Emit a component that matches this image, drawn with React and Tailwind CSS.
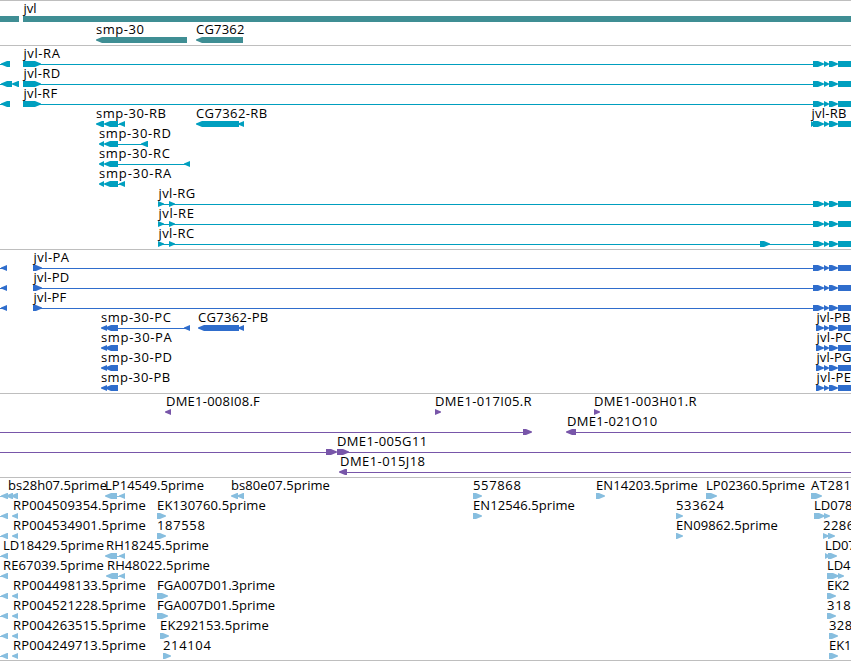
import React from "react";

const FONT = '13px "Open Sans"';
const ruler = document.createElement("canvas").getContext("2d");

// Tracking (px per character) that makes a label span its allotted width.
function tracking(text, width) {
  ruler.font = FONT;
  return (width - ruler.measureText(text).width) / text.length;
}

// Features: "<" and ">" are stranded blocks, "=" is a plain block, "-" an intron line.
const TAIL = [[">", 813, 824], [">", 824, 829], [">", 829, 838], ["=", 838, 851]];
const PTAIL = [[">", 816, 824], [">", 824, 829], [">", 829, 838], ["=", 838, 851]];
const LEFT = [["-", 0, 3], ["<", 1, 10]];
const PLEFT = [["-", 0, 3], ["<", 1, 7]];
const EST = [["-", 0, 4], ["<", 1, 8]];
const EST2 = [...EST, ["<", 12, 18]];

const row = (labels, features) => ({ labels, features });

const tracks = [
  {
    color: "text-[#3f8e94]",
    gap: "gap-px",
    rows: [
      row([["jvl", 23.5, 36]], [["=", 0, 19], ["=", 23, 851]]),
      row([["smp-30", 96, 144], ["CG7362", 196, 244]], [["<", 96, 187], ["<", 196, 243]]),
    ],
  },
  {
    color: "text-[#009fbf]",
    gap: "gap-0",
    rows: [
      row([["jvl-RA", 23.5, 60]], [...LEFT, [">", 23, 41], ["-", 40, 813], ...TAIL]),
      row([["jvl-RD", 23.5, 60]], [["-", 0, 3], ["<", 1, 12], ["<", 12, 19], [">", 23, 41], ["-", 40, 813], ...TAIL]),
      row([["jvl-RF", 23.5, 57]], [...LEFT, [">", 23, 41], ["-", 40, 813], ...TAIL]),
      row(
        [["smp-30-RB", 96, 166], ["CG7362-RB", 196, 267], ["jvl-RB", 811.5, 846]],
        [["<", 96, 104], ["<", 104, 118], ["-", 118, 122], ["<", 119, 125], ["<", 196, 239], ["<", 238, 244], [">", 811, 815], ...TAIL]
      ),
      row([["smp-30-RD", 99, 171]], [["<", 99, 104], ["<", 104, 118], ["-", 118, 144], ["<", 141, 148]]),
      row([["smp-30-RC", 99, 170]], [["<", 99, 104], ["<", 104, 118], ["-", 118, 187], ["<", 184, 190]]),
      row([["smp-30-RA", 99, 171.5]], [["<", 99, 104], ["<", 104, 118], ["-", 118, 122], ["<", 119, 125]]),
      row([["jvl-RG", 158.5, 195]], [[">", 158, 164], ["-", 161, 813], [">", 169, 175], ...TAIL]),
      row([["jvl-RE", 158.5, 194]], [[">", 158, 164], ["-", 161, 813], [">", 169, 175], ...TAIL]),
      row([["jvl-RC", 158.5, 194]], [[">", 158, 164], ["-", 161, 813], [">", 169, 175], [">", 760, 770], ...TAIL]),
    ],
  },
  {
    color: "text-[#2f6dcc]",
    gap: "gap-0",
    rows: [
      row([["jvl-PA", 33.5, 69]], [...PLEFT, [">", 33, 42], ["-", 40, 813], ...TAIL]),
      row([["jvl-PD", 33.5, 69]], [...PLEFT, [">", 33, 42], ["-", 40, 813], ...TAIL]),
      row([["jvl-PF", 33.5, 66]], [...PLEFT, [">", 33, 42], ["-", 40, 813], ...TAIL]),
      row(
        [["smp-30-PC", 101, 171], ["CG7362-PB", 198, 268], ["jvl-PB", 816.5, 850]],
        [["<", 101, 107], ["<", 105, 118], ["-", 118, 187], ["<", 184, 190], ["<", 198, 239], ["<", 238, 244], ...PTAIL]
      ),
      row([["smp-30-PA", 101, 172], ["jvl-PC", 816.5, 851]], [["<", 101, 107], ["<", 105, 118], ...PTAIL]),
      row([["smp-30-PD", 101, 172], ["jvl-PG", 816.5, 851]], [["<", 101, 107], ["<", 105, 118], ...PTAIL]),
      row([["smp-30-PB", 101, 170], ["jvl-PE", 816.5, 851]], [["<", 101, 107], ["<", 105, 118], ...PTAIL]),
    ],
  },
  {
    color: "text-[#7856a9]",
    gap: "gap-0",
    rows: [
      row(
        [["DME1-008I08.F", 166, 259.5], ["DME1-017I05.R", 435, 531.5], ["DME1-003H01.R", 594, 696.5]],
        [["<", 165, 171], [">", 435, 441], [">", 594, 600]]
      ),
      row([["DME1-021O10", 567, 657]], [["-", 0, 523], [">", 523, 532], ["<", 566, 576], ["-", 576, 851]]),
      row([["DME1-005G11", 337, 427]], [["-", 0, 326], [">", 326, 337], [">", 337, 349], ["-", 347, 851]]),
      row([["DME1-015J18", 340, 425]], [["<", 339, 347], ["-", 347, 851]]),
    ],
  },
  {
    color: "text-[#87bedf]",
    gap: "gap-0",
    rows: [
      row(
        [["bs28h07.5prime", 8, 106.5], ["LP14549.5prime", 105, 203.5], ["bs80e07.5prime", 231, 329.5], ["557868", 473, 521], ["EN14203.5prime", 596, 697.5], ["LP02360.5prime", 706, 804.5], ["AT281", 811, 851]],
        [["-", 0, 4], ["<", 1, 8], ["<", 6, 13], ["<", 11, 18], ["<", 105, 117], ["-", 117, 122], ["<", 119, 125], ["<", 231, 238], ["<", 237, 244], [">", 473, 482], [">", 596, 605], [">", 706, 717], [">", 811, 822]]
      ),
      row(
        [["RP004509354.5prime", 13, 145.5], ["EK130760.5prime", 157, 265.5], ["EN12546.5prime", 473, 574.5], ["533624", 676, 724], ["LD078", 814, 852]],
        [...EST2, [">", 157, 166], [">", 473, 482], [">", 676, 683], [">", 814, 825], [">", 824, 830]]
      ),
      row(
        [["RP004534901.5prime", 13, 145.5], ["187558", 157, 205], ["EN09862.5prime", 676, 777.5], ["2286", 823, 854]],
        [...EST2, [">", 157, 166], [">", 676, 683], [">", 823, 829], [">", 828, 835]]
      ),
      row([["LD18429.5prime", 3, 103.5], ["RH18245.5prime", 106, 208.5], ["LD07", 825, 855]], [...EST, ["<", 105, 117], ["-", 117, 122], ["<", 119, 125], [">", 825, 830], [">", 828, 837]]),
      row([["RE67039.5prime", 3, 103.5], ["RH48022.5prime", 107, 209.5], ["LD4", 827, 850]], [...EST, ["<", 106, 118], ["-", 118, 122], ["<", 119, 125], [">", 827, 839], [">", 838, 844]]),
      row([["RP004498133.5prime", 13, 145.5], ["FGA007D01.3prime", 157, 274.5], ["EK2", 827, 849]], [...EST2, [">", 157, 168], [">", 827, 836]]),
      row([["RP004521228.5prime", 13, 145.5], ["FGA007D01.5prime", 157, 274.5], ["318", 827, 851]], [...EST2, [">", 157, 168], [">", 827, 836]]),
      row([["RP004263515.5prime", 13, 145.5], ["EK292153.5prime", 160, 268.5], ["328", 829, 852]], [...EST2, [">", 160, 169], [">", 829, 838]]),
      row([["RP004249713.5prime", 13, 145.5], ["214104", 163, 211], ["EK1", 829, 851]], [...EST2, [">", 163, 171], [">", 829, 838]]),
    ],
  },
];

function Feature({ kind, from, to }) {
  if (kind === "-") return <rect x={from} y="3" width={to - from} height="1" shapeRendering="crispEdges" />;
  if (kind === "=") return <rect x={from} y="0" width={to - from} height="6" shapeRendering="crispEdges" />;
  const head = Math.min(6, to - from);
  const points =
    kind === ">"
      ? `${from},0 ${to - head},0 ${to},2.5 ${to},3.5 ${to - head},6 ${from},6`
      : `${to},0 ${from + head},0 ${from},2.5 ${from},3.5 ${from + head},6 ${to},6`;
  return <polygon points={points} />;
}

function Row({ labels, features }) {
  return (
    <div className="h-5 w-full">
      <div className="relative h-[14px] text-black">
        {labels.map(([text, from, to]) => (
          <span
            key={text}
            className="absolute -top-px leading-[14px] whitespace-nowrap"
            style={{ left: from, letterSpacing: tracking(text, to - from + 0.5) }}
          >
            {text}
          </span>
        ))}
      </div>
      <svg className="block h-[6px] w-[851px] fill-current" viewBox="0 0 851 6">
        {features.map(([kind, from, to], i) => (
          <Feature key={i} kind={kind} from={from} to={to} />
        ))}
      </svg>
    </div>
  );
}

export default function App() {
  return (
    <main className="flex h-[661px] w-[851px] flex-col overflow-hidden border-b border-[#bebebe] bg-white font-['Open_Sans',sans-serif] text-[13px]">
      {tracks.map((track, i) => (
        <section key={i} className={`flex shrink-0 flex-col border-t border-[#bebebe] pt-px pb-0.5 ${track.color} ${track.gap}`}>
          {track.rows.map((r, j) => (
            <Row key={j} {...r} />
          ))}
        </section>
      ))}
    </main>
  );
}
